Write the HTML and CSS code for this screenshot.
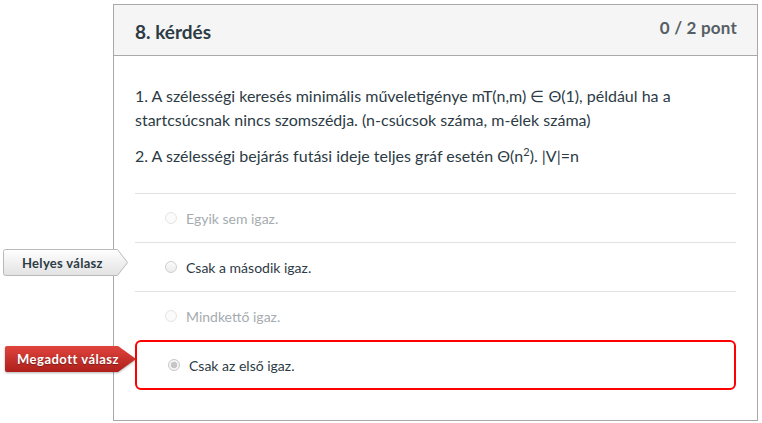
FILE: index.html
```html
<!DOCTYPE html>
<html lang="hu">
<head>
<meta charset="utf-8">
<title>8. kérdés</title>
<link rel="stylesheet" href="styles.css">
</head>
<body>
<div class="card">
  <div class="card-header">
    <h2 class="q-title">8. kérdés</h2>
    <span class="q-points">0 / 2 pont</span>
  </div>
  <div class="card-body">
    <p class="q-text">1. A szélességi keresés minimális műveletigénye mT(n,m) ∈ Θ(1), például ha a startcsúcsnak nincs szomszédja. (n-csúcsok száma, m-élek száma)</p>
    <p class="q-text">2. A szélességi bejárás futási ideje teljes gráf esetén Θ(n<sup>2</sup>). |V|=n</p>
    <div class="answers">
      <div class="answer muted">
        <span class="radio"></span><span class="a-text">Egyik sem igaz.</span>
      </div>
      <div class="answer">
        <div class="tag tag-correct">
          <svg class="tag-bg" width="125" height="27" viewBox="0 0 125 27">
            <defs>
              <linearGradient id="gc" x1="0" y1="0" x2="0" y2="1">
                <stop offset="0" stop-color="#ffffff"/>
                <stop offset="1" stop-color="#e2e2e2"/>
              </linearGradient>
            </defs>
            <path d="M2.5 0.5 H114.5 L124.5 13.5 L114.5 26.5 H2.5 Q0.5 26.5 0.5 24.5 V2.5 Q0.5 0.5 2.5 0.5 Z" fill="url(#gc)" stroke="#b9b9b9"/>
          </svg>
          <span class="tag-text">Helyes válasz</span>
        </div>
        <span class="radio"></span><span class="a-text">Csak a második igaz.</span>
      </div>
      <div class="answer muted">
        <span class="radio"></span><span class="a-text">Mindkettő igaz.</span>
      </div>
      <div class="answer selected">
        <div class="tag tag-given">
          <svg class="tag-bg" width="131" height="26" viewBox="0 0 131 26">
            <defs>
              <linearGradient id="gg" x1="0" y1="0" x2="0" y2="1">
                <stop offset="0" stop-color="#e0443d"/>
                <stop offset="1" stop-color="#ae1f1b"/>
              </linearGradient>
            </defs>
            <path d="M2 0 H113 L131 13 L113 26 H2 Q0 26 0 24 V2 Q0 0 2 0 Z" fill="url(#gg)"/>
          </svg>
          <span class="tag-text">Megadott válasz</span>
        </div>
        <span class="radio checked"></span><span class="a-text">Csak az első igaz.</span>
      </div>
    </div>
  </div>
</div>
</body>
</html>
```

FILE: styles.css
```css
html, body {
  margin: 0;
  padding: 0;
  background: #ffffff;
}
body {
  font-family: Lato, "Liberation Sans", sans-serif;
  color: #2d3b45;
  padding-top: 4px;
}
.card {
  margin-left: 113px;
  width: 643px;
  border: 1px solid #a9a9a9;
  background: #fff;
}
.card-header {
  height: 50px;
  background: #f5f5f5;
  border-bottom: 1px solid #a9a9a9;
  display: flex;
  align-items: center;
  justify-content: space-between;
  padding: 0 20px 0 21px;
}
.q-title {
  margin: 0;
  font-size: 19px;
  font-weight: 700;
  color: #2d3b45;
  padding-top: 2px;
}
.q-points {
  font-size: 17px;
  font-weight: 700;
  color: #555f66;
  margin-top: -6px;
  letter-spacing: 0.2px;
}
.card-body {
  padding: 28px 21px 30px;
}
.q-text {
  margin: 0 0 12px;
  font-size: 16px;
  line-height: 24px;
}
.q-text sup {
  font-size: 11px;
  line-height: 0;
  vertical-align: 6px;
}
.answers {
  margin-top: 25px;
}
.answer {
  position: relative;
  height: 48px;
  border-top: 1px solid #e2e2e2;
  display: flex;
  align-items: center;
  padding-left: 30px;
  font-size: 14px;
}
.answer.muted {
  color: #a6abaf;
}
.answer .radio {
  width: 12px;
  height: 12px;
  border-radius: 50%;
  border: 1px solid #d0d0d0;
  background: linear-gradient(#fafafa, #ececec);
  margin-right: 9px;
  box-sizing: border-box;
  flex: none;
}
.answer.muted .radio {
  border-color: #e4e4e4;
  background: #fbfbfb;
}
.radio.checked {
  border-color: #c9c9c9;
  background: radial-gradient(circle, #c6c6c6 0 3px, #f3f3f3 3.5px);
}
.answer.selected {
  border: 2px solid #ff0000;
  border-radius: 6px;
  height: 46px;
  padding-left: 31px;
}
.tag {
  position: absolute;
  display: flex;
  align-items: center;
  font-size: 13px;
  font-weight: 700;
  letter-spacing: 0.3px;
}
.tag-bg {
  position: absolute;
  left: 0;
  top: 0;
  display: block;
}
.tag-text {
  position: relative;
}
.tag-correct {
  left: -132px;
  top: 6px;
  width: 125px;
  height: 27px;
  color: #2d3b45;
}
.tag-correct .tag-text {
  padding-left: 19px;
}
.tag-given {
  left: -132px;
  top: 4px;
  width: 131px;
  height: 26px;
  color: #ffffff;
  text-shadow: 0 1px 1px rgba(0,0,0,0.35);
  letter-spacing: 0.5px;
}
.tag-given .tag-text {
  padding-left: 12px;
}
.tag-given .tag-bg {
  filter: drop-shadow(0 1px 1px rgba(0,0,0,0.3));
}
```
